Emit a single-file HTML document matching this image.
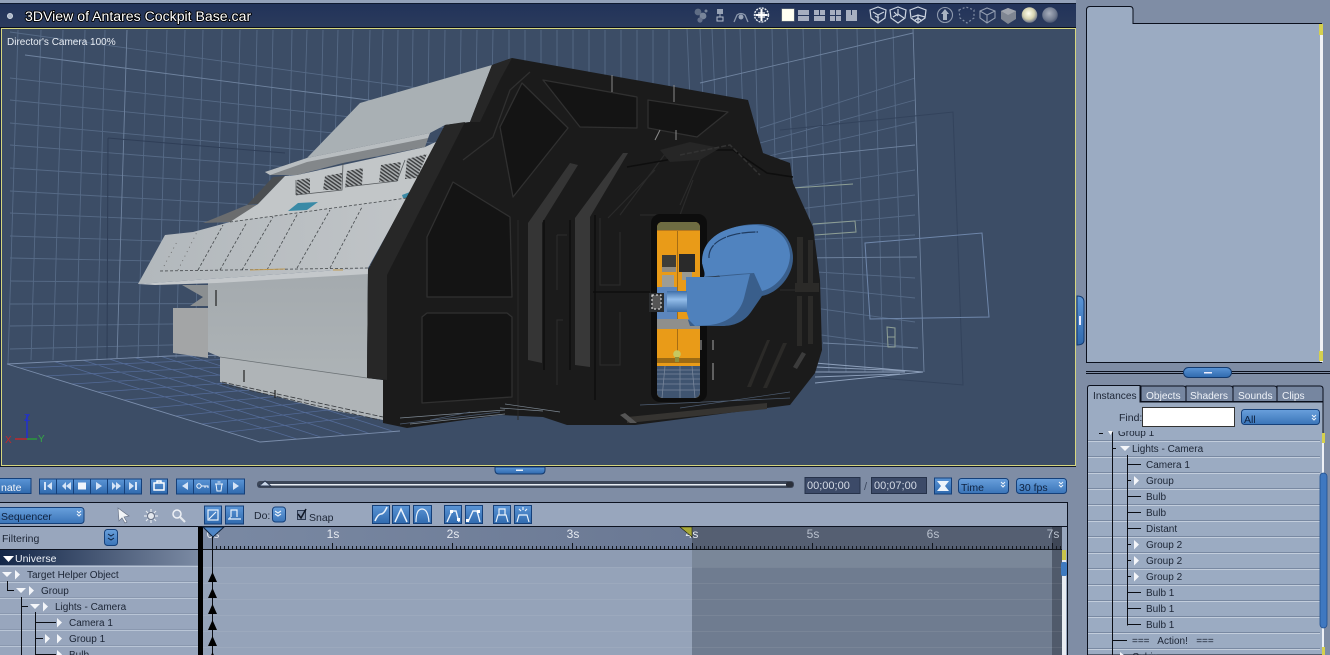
<!DOCTYPE html>
<html><head><meta charset="utf-8"><title>3DView</title>
<style>
html,body{margin:0;padding:0;background:#7f8da5;overflow:hidden}
svg{display:block;position:absolute;left:0;top:0}
text{font-family:"Liberation Sans",sans-serif;font-size:10px;fill:#1c2535}
.w{fill:#f2f5fa}
.r{font-size:12px;fill:#e6eaf1;text-anchor:middle}
.tab{fill:#eef2f8;font-size:10.2px}
</style></head><body>
<svg width="1330" height="655" viewBox="0 0 1330 655" xmlns="http://www.w3.org/2000/svg">
<defs>
<linearGradient id="btn" x1="0" y1="0" x2="0" y2="1"><stop offset="0" stop-color="#5b95d6"/><stop offset="1" stop-color="#2f69ad"/></linearGradient>
<linearGradient id="sel" x1="0" y1="0" x2="0" y2="1"><stop offset="0" stop-color="#69a0dc"/><stop offset="1" stop-color="#3a74b8"/></linearGradient>
<linearGradient id="bar" x1="0" y1="0" x2="0" y2="1"><stop offset="0" stop-color="#22335a"/><stop offset="1" stop-color="#2b3b5c"/></linearGradient>
<linearGradient id="uni" x1="0" y1="0" x2="1" y2="0"><stop offset="0" stop-color="#142748"/><stop offset="1" stop-color="#7b8aa3"/></linearGradient>
<linearGradient id="ruler" x1="0" y1="0" x2="1" y2="0"><stop offset="0" stop-color="#7a89a3"/><stop offset="1" stop-color="#6a7893"/></linearGradient>
<linearGradient id="cyl" x1="0" y1="0" x2="0" y2="1"><stop offset="0" stop-color="#3f6fa8"/><stop offset=".4" stop-color="#93bdea"/><stop offset="1" stop-color="#3d6ca4"/></linearGradient>
<linearGradient id="hull" x1="0" y1="0" x2="0" y2="1"><stop offset="0" stop-color="#a4aaae"/><stop offset="1" stop-color="#adb3b6"/></linearGradient>
<linearGradient id="slope" x1="0" y1="0" x2="1" y2="0"><stop offset="0" stop-color="#b2b8bc"/><stop offset="1" stop-color="#c0c4c7"/></linearGradient>
<radialGradient id="s1" cx=".45" cy=".4" r=".6"><stop offset="0" stop-color="#fffff0"/><stop offset=".6" stop-color="#d6d3b0"/><stop offset="1" stop-color="#6d7488"/></radialGradient>
<radialGradient id="s2" cx=".45" cy=".4" r=".6"><stop offset="0" stop-color="#a8afbd"/><stop offset=".7" stop-color="#727c90"/><stop offset="1" stop-color="#4a5672"/></radialGradient>
<pattern id="hatch" width="3" height="3" patternUnits="userSpaceOnUse" patternTransform="rotate(35)"><rect width="3" height="3" fill="#a8acae"/><rect width="3" height="1.4" fill="#3a3c3e"/></pattern>
<pattern id="tick" width="4" height="4" patternUnits="userSpaceOnUse" x="212" y="546"><rect width="1" height="4" fill="#15181f"/></pattern>
<clipPath id="vp"><rect x="2" y="29" width="1073" height="436"/></clipPath>
<clipPath id="fl"><polygon points="7,364 170,356 400,348 400,430 260,442"/></clipPath>
<clipPath id="tree"><rect x="1088" y="431" width="232" height="224"/></clipPath>
<clipPath id="door"><rect x="657" y="222" width="43" height="176" rx="5"/></clipPath>
</defs>

<!-- chrome backgrounds -->
<rect width="1330" height="655" fill="#7f8da5"/>
<rect width="1078" height="3" fill="#93a1b9"/>
<rect y="3" width="1078" height="1" fill="#0f1a30"/>
<rect y="4" width="1076" height="24" fill="url(#bar)"/>
<rect y="27" width="1076" height="1" fill="#0a0f1c"/>
<circle cx="10" cy="16" r="2.6" fill="#aeb8c8" stroke="#d5dbe5" stroke-width=".8"/>
<text x="25" y="21" style="font-size:14.1px;fill:#fff;stroke:#000;stroke-width:1.8px;paint-order:stroke;stroke-linejoin:round">3DView of Antares Cockpit Base.car</text>

<!-- header icons -->
<g>
<circle cx="698" cy="12" r="3.4" fill="#5f6d85"/><circle cx="703" cy="16" r="3.4" fill="#78859a"/><circle cx="700" cy="20" r="2.6" fill="#64708a"/><circle cx="706" cy="11" r="1.5" fill="#78859a"/>
<rect x="717" y="9" width="6" height="5" fill="#98a3b6"/><path d="M720 14v3" stroke="#98a3b6"/><rect x="717" y="17" width="6" height="4" fill="none" stroke="#b4bdcc"/>
<path d="M734 22l3-7q4-3 8 0l3 7" fill="none" stroke="#8c98ad" stroke-width="1.3"/><circle cx="741" cy="17" r="2.5" fill="#98a3b6"/>
<circle cx="761.500" cy="15" r="7" fill="#2b3b5c" stroke="#e8ecf2" stroke-dasharray="2 1" stroke-width="1.4"/><path d="M761.500 9v12M755.500 15h12" stroke="#fff" stroke-width="2"/><rect x="758" y="12" width="7" height="6" fill="#fff" opacity=".6"/>
<rect x="782" y="9" width="12" height="12" fill="#fffff2" stroke="#e8e8c8" stroke-opacity=".4"/>
<g fill="#a7afc0"><rect x="798" y="10" width="11" height="5"/><rect x="798" y="16" width="11" height="5"/>
<rect x="814" y="10" width="5" height="5"/><rect x="820" y="10" width="5" height="5"/><rect x="814" y="16" width="11" height="5"/>
<rect x="830" y="10" width="5" height="5"/><rect x="836" y="10" width="5" height="5"/><rect x="830" y="16" width="5" height="5"/><rect x="836" y="16" width="5" height="5"/>
<path d="M846 10h5v5h1v-5h5v11h-11z"/></g>
<g fill="none" stroke="#ccd4e0" stroke-width="1.2">
<path d="M870 10l8-3 8 3-1 8-7 5-7-5z"/><path d="M873 12l5 3 6-3M878 15v7M875 16l4 2"/>
<path d="M890 10l8-3 8 3-1 8-7 5-7-5z"/><path d="M893 17l5-3 6 4M898 14v-5M894 12l4 4"/>
<path d="M910 10l8-3 8 3-1 8-7 5-7-5z"/><path d="M912 17l6-2 7 2M918 15v7M914 21l4-3 4 3"/>
</g>
<circle cx="945" cy="15" r="7.500" fill="none" stroke="#8e99ad" stroke-width="1.1"/><path d="M945 9l4 5h-2v6h-4v-6h-2z" fill="#a8b2c2"/>
<path d="M959 10l7-3 8 3 0 8-7 5-7-5z" fill="none" stroke="#7f8ca3" stroke-dasharray="2 2" stroke-width="1.2"/>
<path d="M980 11l7-3 8 3v7l-8 5-7-5zM980 11l7 4 8-4M987 15v8" fill="none" stroke="#929db0" stroke-width="1.1"/>
<path d="M1001 11l7-3 8 3v8l-8 5-7-5z" fill="#7f8692"/><path d="M1001 11l7-3 8 3-8 4z" fill="#a0a5ae"/>
<circle cx="1029.500" cy="15" r="7.800" fill="url(#s1)"/>
<circle cx="1050" cy="15" r="7.800" fill="url(#s2)"/>
</g>

<!-- viewport -->
<rect x="1" y="28" width="1075" height="438" fill="#d6d67e"/>
<rect y="28" width="1" height="438" fill="#1d2a44"/>
<rect x="2" y="29" width="1073" height="436" fill="#3c4d66"/>
<g clip-path="url(#vp)">
<!-- left wall grid -->
<path fill="none" stroke="#566a86" stroke-width=".9" d="M18 30L8 364M41 30L31 360M63 30L53 360M85 30L76 360M105 30L97 360M147 30L138 358M167 30L158 358M185 30L176 358M203 30L195 358M222 30L215 358M240 30L233 358M257 30L250 358M273 30L266 358M292 30L287 300M307 30L302 200M323 30L320 170M338 30L335 150M353 30L350 130M370 30L368 120M383 30L381 110M398 30L397 100M413 30L412 100M429 30L428 100M445 30L444 100M461 30L460 100M477 30L476 90M493 30L492 90M509 30V70M525 30V70M541 30V70M557 30V80M573 30V80M589 30V80M605 30V80M621 30V90M637 30V90M653 30V90M669 30V90M10 32L490 98M10 78L490 133M10 100L490 149M10 123L490 167M10 145L490 183M10 168L490 200M10 191L490 218M10 213L490 234M10 236L490 252M10 258L490 268M10 281L490 286M10 304L490 303M10 326L490 320M10 349L490 337"/>
<path fill="none" stroke="#6f839f" stroke-width=".9" d="M127 30L117 358M25 55L353 98M353 98L490 116"/>
<path fill="none" stroke="#2f3e57" stroke-width="1" d="M108 138L107 360M108 138L285 153"/>
<!-- right wall grid -->
<path fill="none" stroke="#566a86" stroke-width=".9" d="M687 29L690 100M700 29L703 100M712 29L715 100M725 29L727 110M740 29L743 120M755 29L758 150M772 29L775 160M787 29L793 180M803 29L812 300M820 29L829 372M837 29L846 372M857 29L865 372M875 29L883 372M893 29L903 372M760 128L915 78M760 143L915 100M760 158L915 122M780 190L915 170M790 210L915 195M800 226L915 215M800 240L915 235M800 271L915 278M800 286L915 298M800 306L915 322M800 332L915 348"/>
<path fill="none" stroke="#6f839f" stroke-width=".9" d="M913 29L924 372M700 83L913 33M770 160L915 145M793 258L917 257M823 343L918 348"/>
<path fill="none" stroke="#33435c" stroke-width="1" d="M780 130L953 112L963 385L810 372"/>
<path fill="none" stroke="#6f87ab" stroke-width="1" d="M865 243L982 233L989 317L870 319Z"/>
<path fill="none" stroke="#8e9f95" stroke-width="1" d="M793 188L853 184M813 224L855 221L856 232L815 235M887 327L895 328L895 347L888 347ZM887 337L895 337"/>
<path fill="none" stroke="#8ea0bb" stroke-width=".9" d="M815 363L923 372L815 383M815 367L910 371M815 372L905 372M815 377L900 374"/>
<!-- floor -->
<g clip-path="url(#fl)">
<path fill="none" stroke="#536a96" stroke-width=".8" d="M20 368L400 352M46 376L400 358M72 384L400 364M98 392L400 371M124 400L400 378M150 408L400 385M176 416L400 393M202 424L400 402M228 432L400 412M40 357L300 440M70 356L330 440M100 356L360 440M130 356L390 440M160 356L420 440M190 356L450 440M220 356L480 440M250 356L510 440M280 356L540 440M310 356L570 440M340 356L600 440"/>
</g>
<path fill="none" stroke="#7a8dab" stroke-width=".9" d="M7 364L260 442L400 431M7 364L170 356L240 355"/>

<!-- gray hull -->
<polygon points="173,308 208,308 208,358 173,353" fill="#a3a5a6"/>
<polygon points="182,285 208,285 208,306 190,306 203,297" fill="#8b8f91"/>
<polygon points="220,357 367,378 383,380 383,420 320,408 220,382" fill="#afb4b7"/>
<polygon points="208,283 368,272 367,378 220,357 208,352" fill="url(#hull)"/>
<path d="M220 357L367 378" stroke="#6a7074" fill="none" stroke-width=".8"/>
<path d="M222 382L383 417M222 384L380 420" stroke="#33363a" fill="none" stroke-dasharray="5 2" stroke-width=".8"/>
<path d="M244 370V382M275 390V398M216 290V306" stroke="#222" stroke-width="1.200" fill="none"/>
<polygon points="307,158 360,103 492,65 470,122 445,125 430,133" fill="#a9b0b4"/>
<polygon points="203,223 247,205 258,205 230,222" fill="#6a6c6e"/>
<polygon points="247,205 273,177 285,176 258,204" fill="#4b4e51"/>
<polygon points="258,204 285,176 297,175 425,147 440,140 407,200 230,222" fill="#c2c6c8"/>
<polygon points="138,284 165,235 193,232 230,222 407,198 368,268" fill="url(#slope)"/>
<polygon points="138,284 368,268 368,274 217,283 155,285" fill="#c4c8cb"/>
<polygon points="265,172 307,158 430,133 425,147 343,163 297,175 270,175" fill="#83878a"/>
<polygon points="265,172 307,158 430,133 428,138 307,162 270,175" fill="#b8bdc0"/>
<g fill="url(#hatch)"><polygon points="297,180 310,178 310,193 296,195"/><polygon points="325,176 342,173 341,190 323,190"/><polygon points="347,171 363,168 362,185 345,187"/><polygon points="381,165 401,162 398,181 379,182"/><polygon points="407,159 427,154 417,178 405,179"/></g>
<path d="M296 195L342 190L343 163M345 187L397 181L405 160M296 195V180" fill="none" stroke="#55595c" stroke-width=".8"/>
<polygon points="288,211 298,203 318,202 307,210" fill="#3a8aa6"/>
<polygon points="402,195 410,192 407,198 403,198" fill="#3a8aa6"/>
<g fill="none" stroke="#45494c" stroke-width=".8" stroke-dasharray="3 2"><path d="M198 270L223 225M220 270L247 222M242 270L273 217M267 270L298 213M297 268L330 210M330 268L362 207M230 222L407 198M160 271L368 268"/><path d="M178 270L198 230M164 266L178 240" stroke="#666" stroke-dasharray="1 4"/></g>
<path d="M250 270L285 269M333 270L343 270" stroke="#c09a50" fill="none" stroke-width="1"/>

<!-- dark body -->
<polygon points="368,270 445,125 470,122 492,65 512,58 748,100 763,153 790,163 793,183 813,227 820,280 822,350 815,373 790,405 635,425 567,425 543,417 500,415 407,428 383,423 383,380 367,378" fill="#1b1b1b"/>
<polygon points="368,270 445,125 465,122 387,275 387,380 367,378" fill="#272727"/>
<polygon points="470,122 492,65 512,58 500,80 480,122" fill="#262626"/>
<g fill="#141414" stroke="#303030" stroke-width="1.300" stroke-linejoin="round">
<path d="M427 297V237L453 182L510 217L512 297Z"/>
<path d="M422 403V317L427 313H507L512 317V397Z"/>
<path d="M500 127L522 83L568 128L513 197Z"/>
<path d="M543 80L637 97V128L580 127Z"/>
<path d="M648 100L728 112L697 137L648 128Z"/>
</g>
<path d="M463 160L493 137L510 90L530 72" fill="none" stroke="#303030" stroke-width="1.300"/>
<path d="M518 220V420" stroke="#2a2a2a"/>
<polygon points="528,223 570,163 578,165 542,223 542,363 528,360" fill="#353535"/>
<polygon points="575,218 623,153 628,153 590,217 590,367 575,365" fill="#383838"/>
<g fill="none" stroke="#2a2a2a" stroke-width="1.200">
<path d="M557 235H567M557 235V290M563 320H557V385"/>
<path d="M600 218V285H620V232M600 300V365H620V312"/>
<path d="M608 218L655 170M620 215L668 150M680 205L700 160M640 215H680L693 180"/>
<path d="M700 340V400M780 290H815"/>
</g>
<g fill="none" stroke="#0e0e0e" stroke-width="1.500">
<path d="M595 215V400M593 292H650M544 220V370M570 220V370"/>
<path d="M627 167L667 160L697 150L733 150L767 173L793 177"/>
</g>
<!-- right strips -->
<g fill="#2b2a28"><rect x="797" y="237" width="6" height="46"/><rect x="808" y="240" width="5" height="44"/><rect x="795" y="283" width="24" height="9"/><rect x="797" y="296" width="5" height="50"/><rect x="808" y="296" width="5" height="48"/>
<polygon points="747,387 767,340 770,340 751,387"/><polygon points="763,388 783,343 787,343 767,388"/><polygon points="793,367 802,352 806,354 797,369" fill="#3c3c3c"/></g>
<polygon points="660,150 690,142 720,148 700,160 670,162" fill="#262626"/>
<path d="M680 155L730 145L760 175" fill="none" stroke="#333" stroke-width="1.500" stroke-dasharray="5 2"/>
<path d="M612 75V92M674 85V102M660 130L655 140M676 130V140" stroke="#8a8a8a" fill="none"/>
<polygon points="627,417 767,403 767,409 627,423" fill="#363431"/>
<polygon points="620,415 630,423 637,423 625,413" fill="#555"/>
<path fill="none" stroke="#7e8994" stroke-width=".7" d="M400 418L505 410M410 424L505 414M500 408L543 411M505 404L560 412"/>
<path fill="none" stroke="#4e5d72" stroke-width=".7" d="M400 424L500 412M430 420L470 412M640 405L790 398M680 408L790 392"/>
<!-- door halo -->
<rect x="651" y="214" width="56" height="188" rx="9" fill="#0d0d0d"/>
<path d="M701 340V350M713 340V350M713 363V380" stroke="#777" stroke-width="1.500" fill="none"/>

<!-- door -->
<g clip-path="url(#door)">
<rect x="657" y="222" width="43" height="176" fill="#e99b18"/>
<rect x="657" y="222" width="43" height="9" fill="#6e6c42"/>
<rect x="657" y="230" width="43" height="1" fill="#b8791e"/>
<rect x="677" y="231" width="1" height="130" fill="#a66d14"/>
<rect x="662" y="255" width="14" height="12" fill="#3e3d37"/>
<rect x="662" y="267" width="14" height="5" fill="#8e8a80"/>
<rect x="679" y="254" width="16" height="18" fill="#2a2a2a"/>
<rect x="682" y="272" width="10" height="8" fill="#9b9a90"/>
<rect x="662" y="275" width="12" height="12" fill="#9d9d96"/>
<rect x="657" y="287" width="20" height="32" fill="#5c86bd"/>
<rect x="657" y="319" width="43" height="10" fill="#8f8f8c"/>
<rect x="657" y="358" width="43" height="5" fill="#9c6a14"/>
<rect x="657" y="366" width="43" height="32" fill="#3f5470"/>
<path d="M657 370H700M657 374H700M657 379H700M657 384H700M657 390H700M665 366L662 398M680 366V398M692 366L695 398" stroke="#77859a" stroke-width=".8" fill="none"/>
<circle cx="677" cy="354" r="3.800" fill="#c7c85f"/><rect x="675" y="357" width="4" height="5" fill="#8f8f3a"/>
</g>
<!-- blue object -->
<path d="M702 264C703 238 728 224 758 224C780 224 793 240 793 258C793 276 778 293 762 296L751 312C744 322 734 326 722 326L690 326L688 320L740 290Z" fill="#395e8b"/>
<path d="M702 260C703 236 728 225 754 225C776 225 789 238 790 255C790 272 776 288 762 291L754 273L738 274L704 277C706 272 702 268 702 260Z" fill="#5083bf"/>
<path d="M709 258C708 242 728 232 758 232" fill="none" stroke="#1f3b60" stroke-width="1.200" stroke-dasharray="14 1"/>
<path d="M686 277H704C720 277 735 275 750 274L744 298C740 313 728 323 710 325L695 326L689 320L686 310Z" fill="#4f81bc"/>
<rect x="667" y="291" width="20" height="21" fill="url(#cyl)"/>
<rect x="649" y="293" width="15" height="19" fill="#2a2c2e"/>
<rect x="652" y="295" width="9" height="14" fill="#555" stroke="#f2f2f2" stroke-dasharray="2 2"/>

<!-- axis -->
<path d="M27 439V415" stroke="#2130d0" stroke-width="1.500"/><path d="M15 439H27" stroke="#c0282c" stroke-width="1.500"/><path d="M27 439H37" stroke="#2a9a3c" stroke-width="1.500"/>
<text x="24" y="421" style="font-size:10px;fill:#2130d0">Z</text>
<text x="5" y="443" style="font-size:10px;fill:#c0282c">X</text>
<text x="38" y="442" style="font-size:10px;fill:#35a845">Y</text>
<text x="7" y="45" style="fill:#e8edf4;font-size:10px">Director's Camera 100%</text>
</g>

<!-- bottom chrome -->
<rect y="466" width="1078" height="1" fill="#0f1726"/>
<rect y="467" width="1078" height="35" fill="#7f8da5"/>
<path d="M495 467H545V470Q545 474 541 474H499Q495 474 495 470Z" fill="url(#btn)" stroke="#143a6e"/><rect x="516" y="469.500" width="7" height="1.500" fill="#e8f0fa"/>
<!-- vertical splitter -->
<rect x="1076" y="0" width="2" height="655" fill="#7f8da5"/>
<path d="M1077 296Q1084 296 1084 302V340Q1084 345 1077 345Z" fill="url(#btn)" stroke="#143a6e"/><rect x="1079" y="316" width="2" height="9" fill="#eef"/>

<!-- transport -->
<g stroke="#15407a">
<rect x="-2" y="478.500" width="33" height="15" fill="url(#btn)"/>
<rect x="39.500" y="479" width="17" height="15" fill="url(#btn)"/><rect x="56.500" y="479" width="17" height="15" fill="url(#btn)"/><rect x="73.500" y="479" width="17" height="15" fill="url(#btn)"/><rect x="90.500" y="479" width="17" height="15" fill="url(#btn)"/><rect x="107.500" y="479" width="17" height="15" fill="url(#btn)"/><rect x="124.500" y="479" width="17" height="15" fill="url(#btn)"/>
<rect x="150.500" y="479" width="17" height="15" fill="url(#btn)"/>
<rect x="176.500" y="479" width="17" height="15" fill="url(#btn)"/><rect x="193.500" y="479" width="17" height="15" fill="url(#btn)"/><rect x="210.500" y="479" width="17" height="15" fill="url(#btn)"/><rect x="227.500" y="479" width="17" height="15" fill="url(#btn)"/>
</g>
<text x="1" y="491" class="w" style="font-size:10.500px">nate</text>
<g fill="#d6e4f6">
<path d="M44 482h2v8h-2zM52 482v8l-5-4z"/><path d="M66 482v8l-4-4zM71 482v8l-5-4z"/><rect x="78" y="482.500" width="8" height="7" fill="#f0f5fb"/><path d="M96 482l6 4-6 4z"/><path d="M112 482l4 4-4 4zM116 482l5 4-5 4z"/><path d="M129 482l5 4-5 4zM135 482h2v8h-2z"/>
<path d="M154 483h10v7h-10zM157 481h4v2h-4z" fill="none" stroke="#fff" stroke-width="1.500"/>
<path d="M188 482v8l-6-4z"/><path d="M233 482l6 4-6 4z"/>
<circle cx="199" cy="486" r="2.200" fill="none" stroke="#eef4fb"/><path d="M201 486h7v2M205 486v2" fill="none" stroke="#eef4fb"/>
<path d="M215 484h8M216 484l1 7h4l1-7M217.500 482h3" fill="none" stroke="#eef4fb"/>
</g>
<!-- slider -->
<rect x="257" y="481" width="537" height="7" rx="3" fill="#3c4658"/>
<rect x="260" y="484" width="530" height="1.500" fill="#e8edf4"/>
<rect x="786" y="482" width="7" height="5" rx="2" fill="#2a2f3a"/>
<path d="M259 486L265 481L271 486Z" fill="#cbd8ea" stroke="#27354f"/>
<!-- time -->
<rect x="805" y="477.500" width="55" height="16" fill="#3c4a68" stroke="#26324a"/>
<rect x="871.500" y="477.500" width="55" height="16" fill="#3c4a68" stroke="#26324a"/>
<text x="807" y="489" style="fill:#d5dbe6;font-size:11px">00;00;00</text>
<text x="864" y="490" style="fill:#3b475e;font-size:11px">/</text>
<text x="874" y="489" style="fill:#d5dbe6;font-size:11px">00;07;00</text>
<rect x="934.500" y="478" width="17" height="16" fill="url(#btn)" stroke="#15407a"/>
<path d="M937 481h12l-4 5 4 5h-12l4-5z" fill="#eef4fb"/>
<rect x="958.500" y="478.500" width="50" height="15" rx="3" fill="url(#sel)" stroke="#15407a"/>
<rect x="1016.500" y="478.500" width="50" height="15" rx="3" fill="url(#sel)" stroke="#15407a"/>
<text x="961" y="491" style="font-size:10.500px;fill:#0e2240">Time</text>
<text x="1019" y="491" style="font-size:10.500px;fill:#0e2240">30 fps</text>
<path d="M1001 482l2 2 2-2M1001 485l2 2 2-2M1059 482l2 2 2-2M1059 485l2 2 2-2" fill="none" stroke="#eef4fb"/>

<!-- sequencer panel -->
<rect y="502" width="1067" height="153" fill="#98a6bd"/>
<rect y="502" width="1067" height="1" fill="#0c1220"/>
<rect x="1067" y="502" width="1" height="153" fill="#0c1220"/>
<rect x="-3" y="507.500" width="87" height="16" rx="3" fill="url(#sel)" stroke="#15407a"/>
<text x="1" y="520" style="font-size:10.500px;fill:#0e2240">Sequencer</text>
<path d="M77 511l2 2 2-2M77 514l2 2 2-2" fill="none" stroke="#eef4fb"/>
<path d="M118 508l11 8-5 1 3 5-2 1-3-5-3 3z" fill="#f2f5f8" stroke="#6a7488" stroke-width=".7"/>
<circle cx="151" cy="516" r="3.500" fill="#e4e8ee" stroke="#6a7488"/><path d="M151 509v3M151 520v3M144 516h3M155 516h3M146 511l2 2M154 519l2 2M156 511l-2 2M148 519l-2 2" stroke="#e4e8ee" stroke-width="1.200"/>
<circle cx="177" cy="514" r="4" fill="#9fadc4" stroke="#eef1f6" stroke-width="1.500"/><path d="M180 517l5 5" stroke="#e4e8ee" stroke-width="2.200"/>
<g stroke="#15407a">
<rect x="204.500" y="506" width="17" height="18" fill="url(#btn)"/><rect x="225.500" y="506" width="18" height="18" fill="url(#btn)"/>
<rect x="272.500" y="507" width="13" height="15" rx="3" fill="url(#sel)"/>
<rect x="372.500" y="505.500" width="17" height="18" fill="url(#btn)"/><rect x="392.500" y="505.500" width="17" height="18" fill="url(#btn)"/><rect x="413.500" y="505.500" width="18" height="18" fill="url(#btn)"/>
<rect x="444.500" y="505.500" width="17" height="18" fill="url(#btn)"/><rect x="465.500" y="505.500" width="17" height="18" fill="url(#btn)"/>
<rect x="493.500" y="505.500" width="17" height="18" fill="url(#btn)"/><rect x="514.500" y="505.500" width="17" height="18" fill="url(#btn)"/>
</g>
<g fill="none" stroke="#eaf2fb" stroke-width="1.200">
<rect x="208" y="510" width="10" height="10"/><path d="M209 519l7-7"/>
<path d="M228 519h13M230 519v-2M231 517v-7h6v7"/>
<path d="M275 511l3 2 3-2M275 514l3 2 3-2"/>
<path d="M375 521q3-7 6-7t6-7" stroke-width="1.600"/>
<path d="M395 522l6-13 6 13" stroke-width="1.500"/>
<path d="M416 522q0-13 6-13t7 13"/>
<path d="M447 522l5-11h4l3 11" stroke-width="1.400"/>
<path d="M468 522l5-11h4l3 11" stroke-width="1.400"/>
<path d="M496 522l2-7h8l2 7M499 509h6v6h-6z"/>
<path d="M517 522l2-7h8l2 7M519 509l2 2M523 507v3M527 509l-2 2"/>
</g>
<rect x="450" y="510" width="3" height="3" fill="#fff"/><rect x="457" y="518" width="3" height="3" fill="#fff"/><rect x="466" y="519" width="3" height="3" fill="#fff"/><rect x="477" y="510" width="3" height="3" fill="#fff"/>
<text x="254" y="519" style="font-size:10.500px">Do:</text>
<rect x="297.500" y="510.500" width="8" height="9" fill="#8392ab" stroke="#2d3a52"/>
<path d="M298 514l3 4 5-9" fill="none" stroke="#0f1726" stroke-width="1.500"/>
<text x="309" y="521" style="font-size:10.500px">Snap</text>

<rect y="526" width="1067" height="1" fill="#0c1220"/>
<text x="2" y="542" style="font-size:10.500px">Filtering</text>
<rect x="104.500" y="529.500" width="13" height="16" rx="3" fill="url(#sel)" stroke="#15407a"/>
<path d="M108 534l3 2 3-2M108 538l3 2 3-2" fill="none" stroke="#0e2240"/>
<rect y="549" width="198" height="1" fill="#0c1220"/>
<rect y="550" width="198" height="16" fill="url(#uni)"/>
<text x="15" y="562" style="font-size:10.500px;fill:#eef2f8">Universe</text>
<path d="M3 556h11l-5.500 6z" fill="#fff"/>
<!-- list rows -->
<path d="M0 566.500H198M0 582.500H198M0 598.500H198M0 614.500H198M0 630.500H198M0 646.500H198" stroke="#b9c5d6"/>
<path d="M0 565.500H198M0 581.500H198M0 597.500H198M0 613.500H198M0 629.500H198M0 645.500H198" stroke="#8a98af"/>
<g fill="#f4f6fa">
<path d="M2 572h10l-5 5zM15 570l5 4.500-5 5z"/>
<path d="M16 588h10l-5 5zM29 586l5 4.500-5 5z"/>
<path d="M30 604h10l-5 5zM43 602l5 4.500-5 5z"/>
<path d="M57 618l5 4.500-5 5z"/>
<path d="M45 634l5 4.500-5 5zM57 634l5 4.500-5 5z"/>
<path d="M57 650l5 4.500-5 5z"/>
</g>
<path d="M7.500 581V590.500H14M21.500 597V655M21.500 606.500H28M35.500 612V655M35.500 622.500H56M35.500 638.500H43M35.500 654.500H56" fill="none" stroke="#0a0d14"/>
<text x="27" y="578">Target Helper Object</text>
<text x="41" y="594">Group</text>
<text x="55" y="610">Lights - Camera</text>
<text x="69" y="626">Camera 1</text>
<text x="69" y="642">Group 1</text>
<text x="69" y="658">Bulb</text>
<rect x="198" y="527" width="5" height="128" fill="#000"/>

<!-- timeline -->
<rect x="203" y="527" width="489" height="23" fill="url(#ruler)"/>
<rect x="692" y="527" width="360" height="23" fill="#555f72"/>
<rect x="1052" y="527" width="10" height="23" fill="#3f4757"/>
<rect x="203" y="550" width="489" height="105" fill="#95a3b9"/>
<rect x="203" y="550" width="489" height="17" fill="#8e9cb3"/>
<rect x="692" y="550" width="360" height="105" fill="#6f7c90"/>
<rect x="692" y="550" width="360" height="17" fill="#7a8799"/>
<rect x="1052" y="550" width="10" height="105" fill="#505a6b"/>
<path d="M203 583.500H1062M203 599.500H1062M203 615.500H1062M203 631.500H1062M203 647.500H1062M203 567.500H1062" stroke="#fff" stroke-opacity=".07"/>
<rect x="212" y="546" width="850" height="3" fill="url(#tick)"/>
<rect x="203" y="549" width="859" height="1" fill="#10141c"/>
<path d="M212.500 543V549M332.500 543V549M452.500 543V549M572.500 543V549M692.500 543V549M812.500 543V549M932.500 543V549M1052.500 543V549" stroke="#10141c"/>
<text x="213" y="538" class="r">0s</text>
<text x="333" y="538" class="r">1s</text>
<text x="453" y="538" class="r">2s</text>
<text x="573" y="538" class="r">3s</text>
<text x="692" y="538" class="r">4s</text>
<text x="813" y="538" class="r" style="fill:#b8c0cd">5s</text>
<text x="933" y="538" class="r" style="fill:#b8c0cd">6s</text>
<text x="1053" y="538" class="r" style="fill:#b8c0cd">7s</text>
<path d="M680 527H692V537Z" fill="#a8a838" stroke="#20220f" stroke-width=".6"/>
<path d="M203 527H224L213 537Z" fill="#4f86c6" stroke="#10243f"/>
<rect x="212" y="537" width="1" height="118" fill="#0a0d14"/>
<g fill="#000">
<path d="M212.500 572l4.500 10h-9zM212.500 588l4.500 10h-9zM212.500 604l4.500 10h-9zM212.500 620l4.500 10h-9zM212.500 636l4.500 10h-9zM212.500 652l4.500 10h-9z"/>
</g>
<rect x="1062" y="550" width="4" height="105" fill="#e8ecf2"/>
<rect x="1062" y="550" width="4" height="10" fill="#c9c44a"/>
<rect x="1061" y="562" width="6" height="14" rx="2" fill="#3f7abf"/>

<!-- right panel top -->
<path d="M1086.500 362.500V10Q1086.500 6.500 1090 6.500H1130Q1133 6.500 1133 10V23.500H1321.500V362.500Z" fill="#9babc2" stroke="#0a0f1c"/>
<rect x="1320" y="24" width="3" height="338" fill="#f0f2f6"/>
<rect x="1319" y="24" width="4" height="11" fill="#d5d04e"/>
<rect x="1319" y="351" width="4" height="10" fill="#d5d04e"/>
<path d="M1086 371.500H1330M1086 373.500H1330" stroke="#0a0f1c"/>
<rect x="1183.500" y="367.500" width="48" height="10" rx="5" fill="url(#btn)" stroke="#143a6e"/><rect x="1204" y="372" width="8" height="1.500" fill="#eef"/>

<!-- tabs -->
<path d="M1087.500 655V388Q1087.500 385.500 1090 385.500H1140V402H1323V655Z" fill="#9babc2" stroke="#0a0f1c"/>
<path d="M1141 401.500V386H1183Q1186 386 1186 389V401.500ZM1186 401.500V386H1230Q1233 386 1233 389V401.500ZM1233 401.500V386H1274Q1277 386 1277 389V401.500ZM1277 401.500V386H1320Q1323 386 1323 389V401.500Z" fill="#7686a0" stroke="#0a0f1c"/>
<text x="1093" y="399" style="font-size:10.200px">Instances</text>
<text x="1146" y="399" class="tab">Objects</text>
<text x="1190" y="399" class="tab">Shaders</text>
<text x="1238" y="399" class="tab">Sounds</text>
<text x="1282" y="399" class="tab">Clips</text>
<text x="1119" y="421" style="font-size:10.500px">Find:</text>
<rect x="1142.500" y="407.500" width="92" height="19" fill="#fff" stroke="#333"/>
<rect x="1241.500" y="409.500" width="78" height="15" rx="3" fill="url(#sel)" stroke="#15407a"/>
<text x="1244" y="423" style="font-size:10.500px;fill:#0e2240">All</text>
<path d="M1312 415l2 2 2-2M1312 418l2 2 2-2" fill="none" stroke="#eef4fb"/>

<!-- tree -->
<g clip-path="url(#tree)">
<path d="M1088 441.500H1320M1088 457.500H1320M1088 473.500H1320M1088 489.500H1320M1088 505.500H1320M1088 521.500H1320M1088 537.500H1320M1088 553.500H1320M1088 569.500H1320M1088 585.500H1320M1088 601.500H1320M1088 617.500H1320M1088 633.500H1320M1088 649.500H1320" stroke="#c2cddc"/>
<path d="M1088 440.500H1320M1088 456.500H1320M1088 472.500H1320M1088 488.500H1320M1088 504.500H1320M1088 520.500H1320M1088 536.500H1320M1088 552.500H1320M1088 568.500H1320M1088 584.500H1320M1088 600.500H1320M1088 616.500H1320M1088 632.500H1320M1088 648.500H1320" stroke="#7989a2"/>
<path d="M1112.500 430V655M1127.500 455V625.500M1099 433.500H1103M1112.500 448.500H1116M1127.500 464.500H1141M1127.500 480.500H1131M1127.500 496.500H1141M1127.500 512.500H1141M1127.500 528.500H1141M1127.500 544.500H1131M1127.500 560.500H1131M1127.500 576.500H1131M1127.500 592.500H1141M1127.500 608.500H1141M1127.500 624.500H1141M1112.500 640.500H1127" fill="none" stroke="#0a0d14"/>
<g fill="#f4f6fa">
<path d="M1108 431h5l-2.500 4zM1120 446h10l-5 5z"/>
<path d="M1134 476l5 4.500-5 5zM1134 540l5 4.500-5 5zM1134 556l5 4.500-5 5zM1134 572l5 4.500-5 5zM1120 652l5 4-5 4z"/>
</g>
<text x="1118" y="436">Group 1</text>
<text x="1132" y="452">Lights - Camera</text>
<text x="1146" y="468">Camera 1</text>
<text x="1146" y="484">Group</text>
<text x="1146" y="500">Bulb</text>
<text x="1146" y="516">Bulb</text>
<text x="1146" y="532">Distant</text>
<text x="1146" y="548">Group 2</text>
<text x="1146" y="564">Group 2</text>
<text x="1146" y="580">Group 2</text>
<text x="1146" y="596">Bulb 1</text>
<text x="1146" y="612">Bulb 1</text>
<text x="1146" y="628">Bulb 1</text>
<text x="1132" y="644" xml:space="preserve">===   Action!   ===</text>
<text x="1132" y="660">Cabin</text>
</g>
<rect x="1089" y="430" width="232" height="1" fill="#9babc2"/>
<rect x="1322" y="433" width="2" height="222" fill="#eef1f6"/>
<rect x="1322" y="433" width="3" height="10" fill="#d5d04e"/>
<rect x="1322" y="647" width="3" height="8" fill="#d5d04e"/>
<rect x="1320" y="473" width="7" height="155" rx="3.500" fill="#3f78c0" stroke="#1f4f8f" stroke-width=".8"/>
</svg>
</body></html>
